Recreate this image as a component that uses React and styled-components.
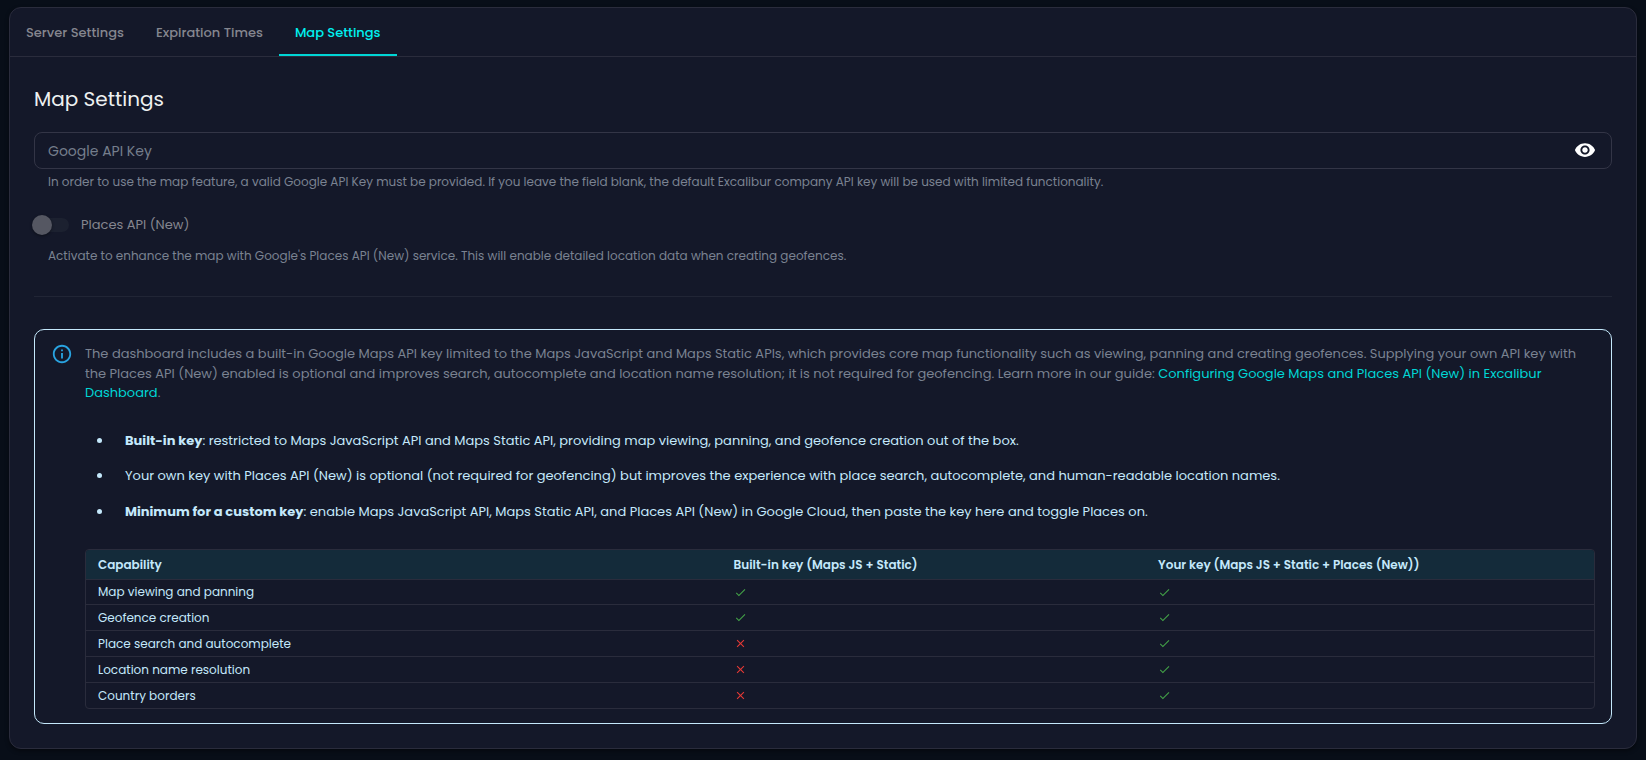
import React, { useState } from 'react'
import styled, { createGlobalStyle } from 'styled-components'

const primaryColor = '#00d5d5'
const cardColor = '#141829'
const borderColor = '#2a2c3c'
const mutedColor = '#7a8291'
const noticeColor = '#c4e8fb'

const tabs = ['Server Settings', 'Expiration Times', 'Map Settings']

const capabilities = [
    { name: 'Map viewing and panning', builtIn: true, custom: true },
    { name: 'Geofence creation', builtIn: true, custom: true },
    { name: 'Place search and autocomplete', builtIn: false, custom: true },
    { name: 'Location name resolution', builtIn: false, custom: true },
    { name: 'Country borders', builtIn: false, custom: true },
]

function EyeIcon() {
    return (
        <svg width="22" height="22" viewBox="0 0 24 24" fill="currentColor" aria-hidden="true">
            <path d="M12 4.5C7 4.5 2.73 7.61 1 12c1.73 4.39 6 7.5 11 7.5s9.27-3.11 11-7.5c-1.73-4.39-6-7.5-11-7.5M12 17c-2.76 0-5-2.24-5-5s2.24-5 5-5 5 2.24 5 5-2.24 5-5 5m0-8c-1.66 0-3 1.34-3 3s1.34 3 3 3 3-1.34 3-3-1.34-3-3-3" />
        </svg>
    )
}

function InfoIcon() {
    return (
        <svg width="22" height="22" viewBox="0 0 24 24" fill="currentColor" aria-hidden="true">
            <path d="M11 7h2v2h-2zm0 4h2v6h-2zm1-9C6.48 2 2 6.48 2 12s4.48 10 10 10 10-4.48 10-10S17.52 2 12 2m0 18c-4.41 0-8-3.59-8-8s3.59-8 8-8 8 3.59 8 8-3.59 8-8 8" />
        </svg>
    )
}

function Mark({ ok }) {
    return (
        <MarkIcon $ok={ok} viewBox="0 0 24 24" role="img" aria-label={ok ? 'Yes' : 'No'}>
            {ok
                ? <path d="M9 16.17 4.83 12l-1.42 1.41L9 19 21 7l-1.41-1.41z" />
                : <path d="M19 6.41 17.59 5 12 10.59 6.41 5 5 6.41 10.59 12 5 17.59 6.41 19 12 13.41 17.59 19 19 17.59 13.41 12z" />}
        </MarkIcon>
    )
}

function CapabilityTable() {
    return (
        <TableFrame>
            <Table>
                <thead>
                    <tr>
                        <HeadCell $width="42.15%">Capability</HeadCell>
                        <HeadCell $width="28.15%">Built-in key (Maps JS + Static)</HeadCell>
                        <HeadCell $width="29.7%">Your key (Maps JS + Static + Places (New))</HeadCell>
                    </tr>
                </thead>
                <tbody>
                    {capabilities.map(data => (
                        <tr key={data.name}>
                            <Cell>{data.name}</Cell>
                            <Cell><Mark ok={data.builtIn} /></Cell>
                            <Cell><Mark ok={data.custom} /></Cell>
                        </tr>
                    ))}
                </tbody>
            </Table>
        </TableFrame>
    )
}

export default function App() {
    const [active, setActive] = useState('Map Settings')
    const [apiKey, setApiKey] = useState('')
    const [visible, setVisible] = useState(false)

    return (
        <>
            <GlobalStyle />
            <Card>
                <TabBar role="tablist">
                    {tabs.map(tab => (
                        <Tab key={tab} type="button" role="tab" aria-selected={active === tab} $active={active === tab} onClick={() => setActive(tab)}>
                            {tab}
                        </Tab>
                    ))}
                </TabBar>

                <Content>
                    <Title>Map Settings</Title>

                    <Field>
                        <Input
                            type={visible ? 'text' : 'password'}
                            placeholder="Google API Key"
                            aria-label="Google API Key"
                            value={apiKey}
                            onChange={(e) => setApiKey(e.target.value)}
                        />
                        <IconButton type="button" aria-label="Toggle key visibility" onClick={() => setVisible(!visible)}>
                            <EyeIcon />
                        </IconButton>
                    </Field>
                    <HelperText>
                        In order to use the map feature, a valid Google API Key must be provided. If you leave the field blank, the default Excalibur company API key will be used with limited functionality.
                    </HelperText>

                    <SwitchRow>
                        <Switch type="checkbox" role="switch" disabled={!apiKey} />
                        Places API (New)
                    </SwitchRow>
                    <HelperText>
                        Activate to enhance the map with Google's Places API (New) service. This will enable detailed location data when creating geofences.
                    </HelperText>

                    <Divider />

                    <Notice>
                        <NoticeIcon><InfoIcon /></NoticeIcon>
                        <NoticeBody>
                            <NoticeText>
                                The dashboard includes a built-in Google Maps API key limited to the Maps JavaScript and Maps Static APIs, which provides core map functionality such as viewing, panning and creating geofences. Supplying your own API key with the Places API (New) enabled is optional and improves search, autocomplete and location name resolution; it is not required for geofencing. Learn more in our guide: <Link href="#guide">Configuring Google Maps and Places API (New) in Excalibur Dashboard</Link>.
                            </NoticeText>
                            <List>
                                <ListItem><b>Built-in key</b>: restricted to Maps JavaScript API and Maps Static API, providing map viewing, panning, and geofence creation out of the box.</ListItem>
                                <ListItem>Your own key with Places API (New) is optional (not required for geofencing) but improves the experience with place search, autocomplete, and human-readable location names.</ListItem>
                                <ListItem><b>Minimum for a custom key</b>: enable Maps JavaScript API, Maps Static API, and Places API (New) in Google Cloud, then paste the key here and toggle Places on.</ListItem>
                            </List>
                            <CapabilityTable />
                        </NoticeBody>
                    </Notice>
                </Content>
            </Card>
        </>
    )
}

const GlobalStyle = createGlobalStyle`
    * {
        box-sizing: border-box;
    }

    body {
        margin: 0;
        padding: 7px 9px 10px;
        background-color: #080e18;
        color: #ffffff;
        font-family: Poppins, Inter, sans-serif;
        font-size: 13px;
    }

    button, input {
        font-family: inherit;
    }
`

const Card = styled.main`
    border: 1px solid ${borderColor};
    border-radius: 12px;
    background-color: ${cardColor};
    box-shadow: 0 2px 4px rgba(0, 0, 0, 0.4);
`

const TabBar = styled.div`
    display: flex;
    height: 49px;
    border-bottom: 1px solid ${borderColor};
`

const Tab = styled.button`
    padding: 4px 16px 0;
    border: 0;
    border-bottom: 2px solid ${props => props.$active ? primaryColor : 'transparent'};
    background: none;
    color: ${props => props.$active ? '#00f0f0' : '#85868f'};
    font-size: 13px;
    font-weight: 500;
    cursor: pointer;
`

const Content = styled.div`
    padding: 24px;
`

const Title = styled.h1`
    margin: 2px 0 17px;
    font-size: 20px;
    font-weight: 400;
    line-height: 32px;
    color: #eef1f1;
`

const Field = styled.div`
    display: flex;
    align-items: center;
    height: 37px;
    padding: 0 15px 0 13px;
    border: 1px solid #333546;
    border-radius: 8px;
`

const Input = styled.input`
    flex: 1;
    min-width: 0;
    padding: 2px 0 0;
    border: 0;
    outline: 0;
    background: none;
    color: #ffffff;
    font-size: 14px;

    &::placeholder {
        color: #757e8c;
        opacity: 1;
    }
`

const IconButton = styled.button`
    display: flex;
    padding: 0 0 1px;
    border: 0;
    background: none;
    color: #ffffff;
    cursor: pointer;
`

const HelperText = styled.p`
    margin: 3px 14px 0;
    font-size: 12px;
    line-height: 20px;
    color: ${mutedColor};
`

const SwitchRow = styled.label`
    display: flex;
    align-items: center;
    gap: 12px;
    width: fit-content;
    height: 36px;
    margin: 15px 0 0;
    color: #85868f;
    font-size: 13px;
`

const Switch = styled.input`
    appearance: none;
    position: relative;
    width: 35px;
    height: 14px;
    margin: 0;
    border-radius: 7px;
    background-color: #1c2130;

    &::before {
        content: '';
        position: absolute;
        top: -3px;
        left: -2px;
        width: 20px;
        height: 20px;
        border-radius: 50%;
        background-color: #555762;
        box-shadow: 0 1px 3px rgba(0, 0, 0, 0.4);
    }

    &:checked::before {
        left: 17px;
        background-color: ${primaryColor};
    }
`

const Divider = styled.hr`
    margin: 30px 0 32px;
    border: 0;
    border-top: 1px solid #212535;
`

const Notice = styled.section`
    display: flex;
    gap: 12px;
    padding: 14px 16px;
    border: 1px solid ${noticeColor};
    border-radius: 10px;
    color: ${noticeColor};
`

const NoticeIcon = styled.div`
    display: flex;
    flex: none;
    align-items: center;
    width: 22px;
    height: 20px;
    color: #29a3e0;
`

const NoticeBody = styled.div`
    flex: 1;
    min-width: 0;
`

const NoticeText = styled.p`
    margin: 0;
    font-size: 13px;
    line-height: 1.5;
    color: ${mutedColor};
`

const Link = styled.a`
    color: ${primaryColor};
    text-decoration: none;
`

const List = styled.ul`
    display: flex;
    flex-direction: column;
    gap: 16px;
    margin: 28px 0;
    padding-left: 28px;
    font-size: 13px;
    line-height: 1.5;

    b {
        font-weight: 700;
    }
`

const ListItem = styled.li`
    padding-left: 12px;
`

const TableFrame = styled.div`
    border: 1px solid ${borderColor};
    border-radius: 4px;
    overflow: hidden;
`

const Table = styled.table`
    width: 100%;
    border-collapse: separate;
    border-spacing: 0;
    table-layout: fixed;
    font-size: 12px;
    line-height: 18px;
`

const HeadCell = styled.th`
    width: ${props => props.$width};
    height: 29px;
    padding: 5px 12px;
    background-color: #142b3a;
    text-align: left;
    font-weight: 600;
`

const Cell = styled.td`
    padding: 3px 12px;
    border-top: 1px solid ${borderColor};

    tr + tr > & {
        height: 26px;
    }
`

const MarkIcon = styled.svg`
    display: block;
    width: 13px;
    height: 13px;
    fill: ${props => props.$ok ? '#43a047' : '#e53935'};
`
